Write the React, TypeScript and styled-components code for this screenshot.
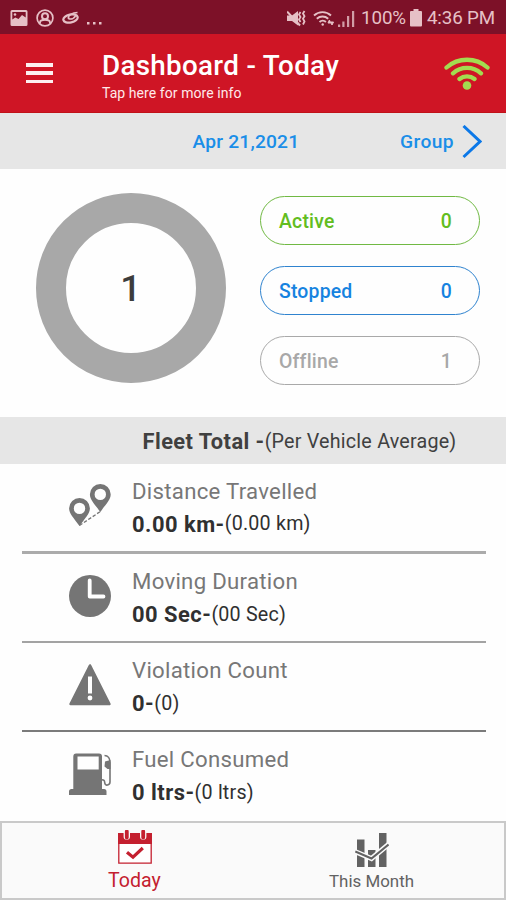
import React from 'react';
import styled, { createGlobalStyle } from 'styled-components';

const GlobalStyle = createGlobalStyle`
  * { box-sizing: border-box; }
  body { margin: 0; background: #fff; font-family: Roboto, "Liberation Sans", sans-serif; }
`;

const Screen = styled.div`
  width: 506px;
  height: 900px;
  display: flex;
  flex-direction: column;
  background: #fefefe;
  overflow: hidden;
  white-space: nowrap;
`;

const StatusBar = styled.div`
  height: 34px;
  flex: none;
  display: flex;
  align-items: center;
  justify-content: space-between;
  padding: 2px 11px 0 10px;
  background: #7d1128;
  color: #e6c0c6;
  font-size: 18.8px;
`;

const StatusIcons = styled.div`
  display: flex;
  align-items: center;
`;

const StatusText = styled.span<{ $gap?: number }>`
  margin-left: ${(p) => p.$gap ?? 0}px;
  line-height: 22px;
  letter-spacing: -0.15px;
`;

const Header = styled.header`
  height: 79px;
  flex: none;
  display: flex;
  align-items: flex-start;
  padding: 16px 16px 0 26px;
  background: #cf1525;
  border-bottom: 1px solid #c01218;
  color: #fff;
`;

const MenuButton = styled.div`
  width: 27px;
  height: 20px;
  margin: 13px 49px 0 0;
  display: flex;
  flex-direction: column;
  justify-content: space-between;
`;

const MenuBar = styled.span`
  height: 3.5px;
  background: #fdeff0;
`;

const HeaderText = styled.div`
  flex: 1;
`;

const Title = styled.h1`
  margin: 0;
  font-size: 27.8px;
  line-height: 32px;
  font-weight: 500;
  letter-spacing: 0.3px;
`;

const Subtitle = styled.div`
  font-size: 14px;
  line-height: 18px;
  margin-top: 2px;
  letter-spacing: 0.07px;
  color: #ffe9ea;
`;

const SignalIcon = styled.svg`
  display: block;
  margin-top: 5px;
`;

const DateBar = styled.div`
  height: 56px;
  flex: none;
  display: grid;
  grid-template-columns: 1fr 108px 1fr;
  align-items: center;
  padding: 1px 24px 0 11px;
  background: #e6e6e6;
  color: #1a8ee8;
  font-size: 19.2px;
  font-weight: 500;
`;

const DateText = styled.span`
  grid-column: 2;
  letter-spacing: 0.2px;
`;

const GroupLink = styled.span`
  display: flex;
  justify-content: flex-end;
  align-items: center;
  gap: 8px;
  letter-spacing: 0.4px;
`;

const Overview = styled.section`
  height: 248px;
  flex: none;
  display: flex;
  justify-content: space-between;
  align-items: flex-start;
  padding: 24px 26px 0 35.5px;
`;

const Donut = styled.div`
  width: 190px;
  height: 190px;
  border-radius: 50%;
  border: 30px solid #a8a8a8;
  display: flex;
  align-items: center;
  justify-content: center;
  font-size: 36.5px;
  font-weight: 500;
  color: #3c3c3c;
`;

const Pills = styled.div`
  display: flex;
  flex-direction: column;
  gap: 21.3px;
  padding-top: 2.5px;
`;

const Pill = styled.div<{ $line: string; $text: string }>`
  width: 220px;
  height: 49px;
  display: flex;
  align-items: center;
  justify-content: space-between;
  padding: 2px 27px 0 18px;
  border: 1.5px solid ${(p) => p.$line};
  border-radius: 25px;
  color: ${(p) => p.$text};
  font-size: 19.4px;
  font-weight: 500;
  letter-spacing: 0.2px;
`;

const SectionTitle = styled.div`
  height: 47px;
  flex: none;
  display: flex;
  align-items: baseline;
  padding: 11.5px 0 0 142.5px;
  background: #e6e6e6;
  color: #404040;
`;

const SectionName = styled.span`
  font-size: 21.8px;
  line-height: 26px;
  font-weight: 700;
  letter-spacing: 0.45px;
`;

const SectionNote = styled.span`
  font-size: 19.7px;
  letter-spacing: 0.22px;
  transform: translateY(-1px);
`;

const Metrics = styled.section`
  flex: 1;
  padding: 0 20px 0 22px;
`;

const Metric = styled.div<{ $line?: string; $width?: number }>`
  height: 89px;
  display: flex;
  padding: 13px 0 0 47px;
  border-bottom: ${(p) => p.$width ?? 0}px solid ${(p) => p.$line ?? 'transparent'};
  &:first-child { height: 90px; }
`;

const MetricIcon = styled.svg`
  width: 42px;
  height: 42px;
  margin: 7.5px 21px 0 0;
  flex: none;
  overflow: visible;
  color: #757575;
`;

const MetricLabel = styled.div`
  font-size: 22.2px;
  line-height: 28px;
  font-weight: 440;
  letter-spacing: 0.28px;
  color: #777;
`;

const MetricValue = styled.div`
  display: flex;
  align-items: baseline;
  margin-top: 6px;
  line-height: 28px;
  color: #303030;
`;

const Total = styled.span`
  font-size: 21.9px;
  font-weight: 750;
  letter-spacing: 0.5px;
`;

const Average = styled.span<{ $lift: number }>`
  font-size: 19.7px;
  letter-spacing: 0.2px;
  transform: translateY(-${(p) => p.$lift}px);
`;

const NavBar = styled.nav`
  height: 79px;
  flex: none;
  display: grid;
  grid-template-columns: 1fr 1fr;
  padding: 0 14px;
  background: #fafafa;
  border: 2px solid #c9c9c9;
`;

const NavItem = styled.div<{ $color: string; $size: number; $top: number }>`
  display: flex;
  flex-direction: column;
  align-items: center;
  padding-top: ${(p) => p.$top}px;
  color: ${(p) => p.$color};
  font-size: ${(p) => p.$size}px;
`;

const NavLabel = styled.span<{ $gap: number }>`
  margin-top: ${(p) => p.$gap}px;
  line-height: 24px;
`;

const PinsIcon = () => (
  <MetricIcon viewBox="0 0 42 42">
    <g fill="currentColor" fillRule="evenodd">
      <path d="M31.3 -1a10.4 10.4 0 0 0-10.4 10.3c0 5.8 4.8 9.7 10.4 17.7 5.6-8 10.4-11.9 10.4-17.7A10.4 10.4 0 0 0 31.3 -1Zm0 4.7a5.7 5.7 0 1 1 0 11.4 5.7 5.7 0 0 1 0-11.4Z" />
      <path d="M10.5 13A10.4 10.4 0 0 0 .1 23.3C.1 29.1 4.9 33 10.5 41c5.6-8 10.4-11.9 10.4-17.7A10.4 10.4 0 0 0 10.5 13Zm0 4.7a5.7 5.7 0 1 1 0 11.4 5.7 5.7 0 0 1 0-11.4Z" />
    </g>
    <path d="M10.5 40.5 31.3 26.5" stroke="currentColor" strokeWidth="1.3" strokeDasharray="3.5 1.8" />
  </MetricIcon>
);

const ClockIcon = () => (
  <MetricIcon viewBox="0 0 42 42">
    <circle cx="21" cy="21" r="21" fill="currentColor" />
    <path d="M20.7 5.5V21.5H34.5" fill="none" stroke="#fff" strokeWidth="3.8" strokeLinecap="round" strokeLinejoin="round" />
  </MetricIcon>
);

const WarningIcon = () => (
  <MetricIcon viewBox="0 0 42 42">
    <path d="M21 1.5 40.4 40H1.6Z" fill="currentColor" stroke="currentColor" strokeWidth="2.6" strokeLinejoin="round" />
    <path d="M19 12.5h4v17h-4Z" fill="#fff" />
    <circle cx="21" cy="34" r="2.4" fill="#fff" />
  </MetricIcon>
);

const FuelIcon = () => (
  <MetricIcon viewBox="0 0 42 42">
    <path
      fillRule="evenodd"
      fill="currentColor"
      d="M7.5 .5H30a3 3 0 0 1 3 3V36h2a2.500 2.500 0 0 1 2.500 2.500V42H0v-3.500A2.500 2.500 0 0 1 2.500 36H4.300V3.500a3 3 0 0 1 3.200-3ZM8.500 3.500V16.500H29.700V3.500Z"
    />
    <path d="M35.500 2.500c3.500 0 5.500 3 5.500 7V29c0 3-5 5-5.300.5-.2-2.500-.8-2.500-3-2.700" fill="none" stroke="currentColor" strokeWidth="1.6" />
    <path d="M36 8.500 41.500 7V16h-3l-3-2.500Z" fill="currentColor" />
  </MetricIcon>
);

const PhotoIcon = () => (
  <svg width="18" height="18" viewBox="0 0 18 18">
    <path fillRule="evenodd" fill="currentColor" d="M2 1h14a1.5 1.5 0 0 1 1.5 1.5v13A1.5 1.5 0 0 1 16 17H2A1.5 1.5 0 0 1 .5 15.5v-13A1.5 1.5 0 0 1 2 1Zm.3 2v7.5l3-2 3.2 1.5 3.5-4 3.7 2.5V3Z" />
    <circle cx="5" cy="5.5" r="1.3" fill="currentColor" />
  </svg>
);

const PersonIcon = () => (
  <svg width="18" height="18" viewBox="0 0 18 18" fill="none" stroke="currentColor">
    <circle cx="9" cy="9" r="7.9" strokeWidth="1.7" />
    <circle cx="9" cy="7.2" r="3" strokeWidth="2" />
    <path d="M4 14.5v-1c0-2 2-2.7 5-2.7s5 .7 5 2.7v1" strokeWidth="1.9" />
  </svg>
);

const OrbitIcon = () => (
  <svg width="18" height="14" viewBox="0 0 18 14" fill="none" stroke="currentColor">
    <ellipse cx="8.5" cy="7.5" rx="7.3" ry="4" transform="rotate(-12 8.5 7.5)" strokeWidth="2.2" />
    <path d="M15.5 1.5C10.5 1.5 5.5 4.500 6.500 7.500c2.500 1.200 5.500 0 7-2.500" strokeWidth="1.7" />
  </svg>
);

const StatusLeft = styled(StatusIcons)`
  gap: 8px;
`;

const Ellipsis = styled.svg`
  margin-top: 10px;
  margin-left: -1px;
`;

const MuteIcon = () => (
  <svg width="19" height="17" viewBox="0 0 19 17">
    <path fill="currentColor" d="M0 5.5h5l6-4.5v14.500l-6-4.500H0Z" />
    <path d="M0 1.5 13 15.5" stroke="currentColor" strokeWidth="2" />
    <path d="m13.5 2-1.5 2.5 1.5 2.5-1.5 2.5 1.5 2.5M17.5 1 16 3.5l1.5 2.7L16 8.8l1.5 2.7L16 14.5" fill="none" stroke="currentColor" strokeWidth="1.8" />
  </svg>
);

const WifiSmall = () => (
  <svg width="22" height="17" viewBox="0 0 22 17" fill="none" stroke="currentColor" strokeWidth="1.9">
    <path d="M1 5.5a12.5 12.5 0 0 1 17 0M3.8 8.7a8.5 8.5 0 0 1 11.4 0M6.5 12a4.7 4.7 0 0 1 6.4 0" />
    <circle cx="9.7" cy="14.5" r="1.2" fill="currentColor" stroke="none" />
    <path d="m15 13 1.4-3 1.4 3Zm2.5-1 1.5 3 1.5-3Z" fill="currentColor" strokeWidth="1" />
  </svg>
);

const SignalBars = () => (
  <svg width="17" height="17" viewBox="0 0 17 17" fill="currentColor">
    <path d="M0 14.5h2.2V17H0ZM4.3 11.5h2.2v5.5H4.3ZM9 6h2.2v11H9ZM14 1h2.2v16H14Z" opacity=".8" />
  </svg>
);

const BatteryIcon = () => (
  <svg width="12" height="18" viewBox="0 0 12 18">
    <path fill="currentColor" d="M3.5 0h5v2H11a1 1 0 0 1 1 1v13.5a1 1 0 0 1-1 1H1a1 1 0 0 1-1-1V3a1 1 0 0 1 1-1h2.5Z" />
  </svg>
);

const BatterySlot = styled.span`
  display: flex;
  margin: 0 5px 0 4px;
`;

const SignalSlot = styled.span`
  display: flex;
  gap: 7px;
  align-items: center;
`;

const Reception = styled.span`
  display: flex;
  align-items: center;
  gap: 3px;
`;

const CalendarIcon = () => (
  <svg width="34" height="34" viewBox="0 0 34 34">
    <path d="M.8 5v28.2h32.4V5" fill="#fff" stroke="currentColor" strokeWidth="1.3" />
    <path d="M0 3h34v11H0Z" fill="currentColor" />
    <path d="M8.8 1v5.5M25.2 1v5.5" stroke="#fafafa" strokeWidth="6.4" strokeLinecap="round" />
    <path d="M8.8 1.5v6M25.2 1.5v6" stroke="currentColor" strokeWidth="3.8" strokeLinecap="round" />
    <path d="m9 22.2 6 5L24.8 18" fill="none" stroke="currentColor" strokeWidth="3.2" />
  </svg>
);

const ChartIcon = () => (
  <svg width="34" height="34" viewBox="0 0 34 34">
    <path d="M2 6.5h7.5V34H2ZM13 17h7.5v17H13ZM24 0h7.5v34H24Z" fill="currentColor" />
    <path d="m0 18.5 16.5 7L34 11" fill="none" stroke="#fafafa" strokeWidth="5" />
    <path d="m.3 18.5 16.2 7L33.5 11.5" fill="none" stroke="currentColor" strokeWidth="2" />
  </svg>
);

const metrics = [
  { label: 'Distance Travelled', total: '0.00 km-', average: '(0.00 km)', Icon: PinsIcon, line: '#ababab', width: 3, lift: 2 },
  { label: 'Moving Duration', total: '00 Sec-', average: '(00 Sec)', Icon: ClockIcon, line: '#a3a3a3', width: 2, lift: 1 },
  { label: 'Violation Count', total: '0-', average: '(0)', Icon: WarningIcon, line: '#7b7b7b', width: 2, lift: 1 },
  { label: 'Fuel Consumed', total: '0 ltrs-', average: '(0 ltrs)', Icon: FuelIcon, line: undefined, width: 0, lift: 1 },
];

const statuses = [
  { label: 'Active', count: 0, line: '#70b943', text: '#62bd20' },
  { label: 'Stopped', count: 0, line: '#2f83cf', text: '#1683e0' },
  { label: 'Offline', count: 1, line: '#a9a9a9', text: '#a8a8a8' },
];

export default function App() {
  return (
    <Screen>
      <GlobalStyle />
      <StatusBar>
        <StatusLeft>
          <PhotoIcon />
          <PersonIcon />
          <OrbitIcon />
          <Ellipsis width="16" height="4" viewBox="0 0 16 4" fill="currentColor">
            <path d="M0 1h2.5v2.5H0ZM6 1h2.5v2.5H6ZM12 1h2.5v2.5H12Z" />
          </Ellipsis>
        </StatusLeft>
        <StatusIcons>
          <SignalSlot>
            <MuteIcon />
            <Reception>
              <WifiSmall />
              <SignalBars />
            </Reception>
          </SignalSlot>
          <StatusText $gap={6}>100%</StatusText>
          <BatterySlot><BatteryIcon /></BatterySlot>
          <StatusText>4:36 PM</StatusText>
        </StatusIcons>
      </StatusBar>

      <Header>
        <MenuButton>
          <MenuBar />
          <MenuBar />
          <MenuBar />
        </MenuButton>
        <HeaderText>
          <Title>Dashboard - Today</Title>
          <Subtitle>Tap here for more info</Subtitle>
        </HeaderText>
        <SignalIcon width="46" height="36" viewBox="0 0 46 36" fill="none" stroke="#a3dc50" strokeWidth="4.3" strokeLinecap="round">
          <path d="M2.5 12.5a31 31 0 0 1 41 0M9 18.3a21 21 0 0 1 28 0M15.5 24a12 12 0 0 1 15 0" />
          <circle cx="23" cy="30.5" r="4.3" fill="#a3dc50" stroke="none" />
        </SignalIcon>
      </Header>

      <DateBar>
        <DateText>Apr 21,2021</DateText>
        <GroupLink>
          Group
          <svg width="20" height="34" viewBox="0 0 20 34" fill="none" stroke="#0b78e8" strokeWidth="3">
            <path d="m1.5 1 16.5 15.5L1.5 32" />
          </svg>
        </GroupLink>
      </DateBar>

      <Overview>
        <Donut>1</Donut>
        <Pills>
          {statuses.map((s) => (
            <Pill key={s.label} $line={s.line} $text={s.text}>
              <span>{s.label}</span>
              <span>{s.count}</span>
            </Pill>
          ))}
        </Pills>
      </Overview>

      <SectionTitle>
        <SectionName>Fleet Total -</SectionName>
        <SectionNote>(Per Vehicle Average)</SectionNote>
      </SectionTitle>

      <Metrics>
        {metrics.map(({ label, total, average, Icon, line, width, lift }) => (
          <Metric key={label} $line={line} $width={width}>
            <Icon />
            <div>
              <MetricLabel>{label}</MetricLabel>
              <MetricValue>
                <Total>{total}</Total>
                <Average $lift={lift}>{average}</Average>
              </MetricValue>
            </div>
          </Metric>
        ))}
      </Metrics>

      <NavBar>
        <NavItem $color="#c4202f" $size={19.6} $top={7}>
          <CalendarIcon />
          <NavLabel $gap={5}>Today</NavLabel>
        </NavItem>
        <NavItem $color="#626262" $size={16.9} $top={10}>
          <ChartIcon />
          <NavLabel $gap={2}>This Month</NavLabel>
        </NavItem>
      </NavBar>
    </Screen>
  );
}
